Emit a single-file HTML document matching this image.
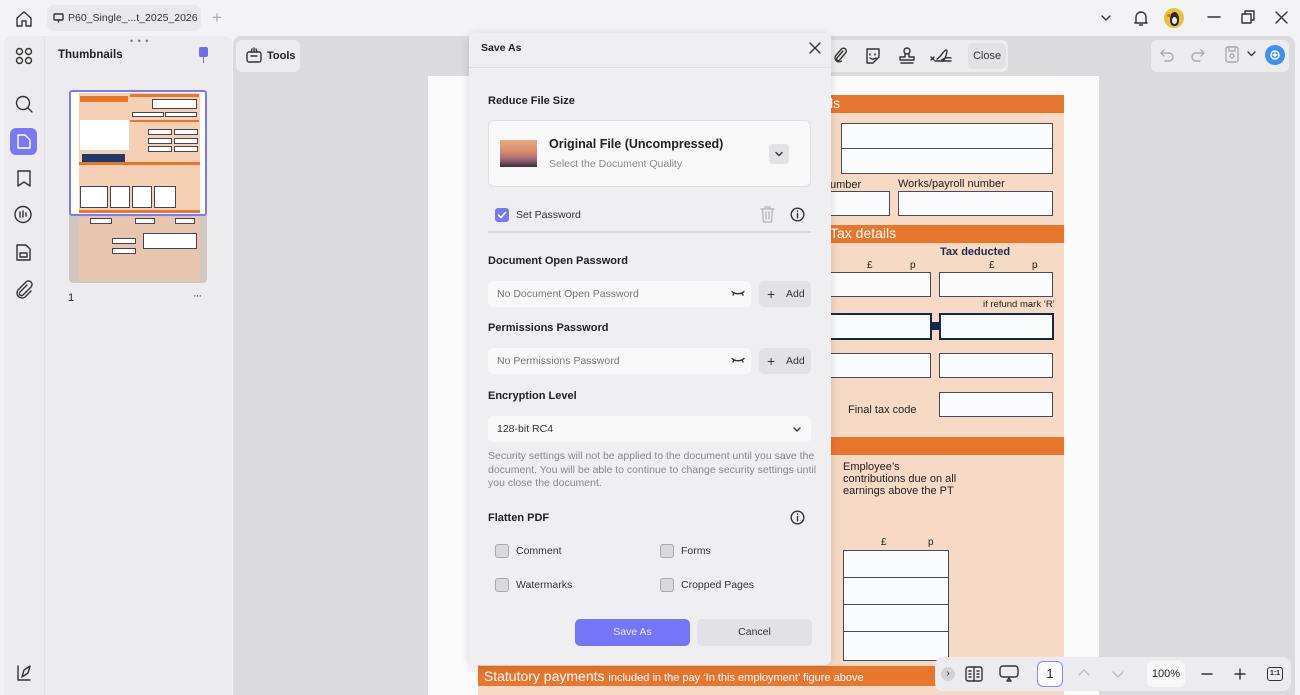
<!DOCTYPE html>
<html><head><meta charset="utf-8"><style>
*{box-sizing:border-box;margin:0;padding:0}
body{width:1300px;height:695px;overflow:hidden;background:#f3f3f5;font-family:"Liberation Sans",sans-serif;position:relative;color:#222}
.a{position:absolute}
svg{position:absolute;fill:none;stroke:#333;stroke-width:1.4;stroke-linecap:round;stroke-linejoin:round}
.box{position:absolute;background:#fafbfd;border:1.3px solid #4a4a5a}
.orng{position:absolute;background:#e8772e;color:#fff;font-size:14px;padding-left:2px}
.lbl{position:absolute;font-size:11px;color:#222}
.mt{position:absolute;font-size:11px;color:#222;font-weight:bold}
.cb{position:absolute;width:14px;height:14px;border:1px solid #aaa;border-radius:3px;background:#d9d9dc}
.ct{position:absolute;font-size:10.5px;color:#333}
.tb{position:absolute;border:0.8px solid #445;background:#fff}
</style></head><body>
<!-- top bar -->
<svg style="left:14px;top:9px" width="20" height="20" viewBox="0 0 20 20"><path d="M3 9 L10 3 L17 9 V17 H12 V12 H8 V17 H3 Z"/></svg>
<div class="a" style="left:47px;top:5px;width:154px;height:26px;background:#e9e9ec;border-radius:7px"></div>
<svg style="left:53px;top:13px" width="11" height="10" viewBox="0 0 11 10"><rect x="1" y="1" width="9" height="6" rx="1"/><path d="M5.5 7v2"/></svg>
<div class="a" style="left:68px;top:12px;font-size:10.5px;color:#333">P60_Single_...t_2025_2026</div>
<div class="a" style="left:212px;top:8px;font-size:17px;color:#aaa">+</div>
<svg style="left:1100px;top:13px" width="12" height="10" viewBox="0 0 12 10"><path d="M2 3l4 4 4-4"/></svg>
<svg style="left:1133px;top:9px" width="16" height="18" viewBox="0 0 16 18"><path d="M3 13V8a5 5 0 0 1 10 0v5l1 1H2z M6.5 16h3"/></svg>
<div class="a" style="left:1164px;top:8px;width:20px;height:20px;border-radius:50%;background:#e8c23a;overflow:hidden">
<div class="a" style="left:6px;top:4px;width:9px;height:14px;border-radius:50% 50% 40% 40%;background:#2b2b2b"></div>
<div class="a" style="left:8px;top:9px;width:5px;height:7px;border-radius:50%;background:#f4f0e6"></div>
<div class="a" style="left:3px;top:6px;width:4px;height:3px;border-radius:50%;background:#e86a2a"></div></div>
<svg style="left:1207px;top:10px" width="14" height="14" viewBox="0 0 14 14"><path d="M1 7h12"/></svg>
<svg style="left:1241px;top:10px" width="14" height="14" viewBox="0 0 14 14"><rect x="1" y="4" width="9" height="9"/><path d="M4 4V1h9v9h-3"/></svg>
<svg style="left:1275px;top:11px" width="13" height="13" viewBox="0 0 13 13"><path d="M1 1l11 11M12 1L1 12"/></svg>

<!-- left rail -->
<div class="a" style="left:4px;top:36px;width:228px;height:659px;background:#ececee;border-radius:8px 8px 0 0"></div>
<div class="a" style="left:44px;top:36px;width:1px;height:659px;background:#e2e2e4"></div>
<svg style="left:15px;top:47px" width="18" height="18" viewBox="0 0 18 18"><circle cx="4.5" cy="4.5" r="3"/><circle cx="13.5" cy="4.5" r="3"/><circle cx="4.5" cy="13.5" r="3"/><circle cx="13.5" cy="13.5" r="3"/></svg>
<svg style="left:14px;top:94px" width="20" height="20" viewBox="0 0 20 20"><circle cx="9" cy="9" r="6.5"/><path d="M14 14l4 4"/></svg>
<div class="a" style="left:10px;top:128px;width:27px;height:27px;border-radius:6px;background:#7b78f5"></div>
<svg style="left:16px;top:133px;stroke:#fff" width="16" height="17" viewBox="0 0 16 17"><path d="M2 2h7l5 5v8H2z"/></svg>
<svg style="left:16px;top:169px" width="16" height="19" viewBox="0 0 16 19"><path d="M2 2h12v15l-6-4-6 4z"/></svg>
<svg style="left:13px;top:205px" width="21" height="20" viewBox="0 0 21 20"><circle cx="10" cy="9.5" r="8"/><path d="M7 7v5M10 6v6M13 8v3"/></svg>
<svg style="left:15px;top:243px" width="17" height="19" viewBox="0 0 17 19"><path d="M2 2h9l4 4v11H2z M5 10h7v4H5z"/></svg>
<svg style="left:15px;top:280px" width="18" height="20" viewBox="0 0 18 20"><path d="M12 5l-7 7a2 2 0 0 0 3 3l8-8a3.5 3.5 0 0 0-5-5l-8 8a5 5 0 0 0 7 7l6-6"/></svg>
<svg style="left:15px;top:664px" width="18" height="18" viewBox="0 0 18 18"><path d="M3 2v14h12 M7 13l2-7 6-4-2 7z"/></svg>

<!-- thumbnails -->
<div class="a" style="left:130px;top:36px;font-size:9px;color:#777;letter-spacing:1px">• • •</div>
<div class="a" style="left:58px;top:49px;font-size:11.5px;font-weight:bold">Thumbnails</div>
<div class="a" style="left:199px;top:47px;width:9px;height:10px;background:#6f6cf0;border-radius:2px"></div>
<div class="a" style="left:203px;top:57px;width:1px;height:6px;background:#6f6cf0"></div>
<div class="a" style="left:69px;top:215px;width:138px;height:68px;background:#d2c7bf;border-radius:0 0 4px 4px"></div>
<div class="a" style="left:79px;top:217px;width:121px;height:64px;background:#e8c5ae"></div>
<div class="tb" style="left:90px;top:218px;width:22px;height:6px"></div>
<div class="tb" style="left:135px;top:218px;width:20px;height:6px"></div>
<div class="tb" style="left:175px;top:218px;width:20px;height:6px"></div>
<div class="tb" style="left:112px;top:238px;width:24px;height:6px"></div>
<div class="tb" style="left:112px;top:248px;width:24px;height:6px"></div>
<div class="tb" style="left:143px;top:233px;width:54px;height:16px"></div>
<div class="a" style="left:69px;top:90px;width:138px;height:126px;border:2px solid #7b78f5;background:#fff;border-radius:3px"></div>
<div class="a" style="left:79px;top:93px;width:121px;height:120px;background:#f5d0b4"></div>
<div class="a" style="left:80px;top:96px;width:48px;height:6px;background:#e8772e"></div>
<div class="a" style="left:130px;top:94px;width:69px;height:3px;background:#e8772e"></div>
<div class="tb" style="left:152px;top:99px;width:45px;height:10px"></div>
<div class="tb" style="left:132px;top:112px;width:32px;height:5px"></div>
<div class="tb" style="left:165px;top:112px;width:32px;height:5px"></div>
<div class="a" style="left:130px;top:120px;width:69px;height:2px;background:#e8772e"></div>
<div class="tb" style="left:148px;top:129px;width:24px;height:6px"></div>
<div class="tb" style="left:174px;top:129px;width:24px;height:6px"></div>
<div class="tb" style="left:148px;top:138px;width:24px;height:6px"></div>
<div class="tb" style="left:174px;top:138px;width:24px;height:6px"></div>
<div class="tb" style="left:148px;top:146px;width:24px;height:6px"></div>
<div class="tb" style="left:174px;top:146px;width:24px;height:6px"></div>
<div class="a" style="left:80px;top:120px;width:49px;height:30px;background:#fff"></div>
<div class="a" style="left:82px;top:154px;width:43px;height:9px;background:#1c3a6a"></div>
<div class="a" style="left:79px;top:162px;width:121px;height:3px;background:#e8772e"></div>
<div class="tb" style="left:80px;top:186px;width:28px;height:22px"></div>
<div class="tb" style="left:110px;top:186px;width:20px;height:22px"></div>
<div class="tb" style="left:132px;top:186px;width:20px;height:22px"></div>
<div class="tb" style="left:154px;top:186px;width:22px;height:22px"></div>
<div class="a" style="left:79px;top:210px;width:121px;height:3px;background:#e8772e"></div>
<div class="a" style="left:68px;top:292px;font-size:11px">1</div>
<div class="a" style="left:193px;top:290px;font-size:11px;letter-spacing:-1px">···</div>

<!-- viewer -->
<div class="a" style="left:233px;top:36px;width:1062px;height:659px;background:#dbdbde;border-radius:8px 8px 0 0"></div>
<div class="a" style="left:428px;top:76px;width:671px;height:619px;background:#fbfbfb"></div>
<div class="a" style="left:478px;top:95px;width:586px;height:600px;background:#f6dac5"></div>
<div class="orng" style="left:478px;top:95px;width:586px;height:18px"><span style="position:absolute;left:352px;top:0">ls</span></div>
<div class="box" style="left:841px;top:123px;width:212px;height:26px;border-bottom:none"></div>
<div class="box" style="left:841px;top:148px;width:212px;height:26px"></div>
<div class="lbl" style="left:830px;top:179px">umber</div>
<div class="lbl" style="left:898px;top:178px">Works/payroll number</div>
<div class="box" style="left:830px;top:191px;width:60px;height:25px;border-left:none"></div>
<div class="box" style="left:898px;top:191px;width:155px;height:25px"></div>
<div class="orng" style="left:478px;top:225px;width:586px;height:18px"><span style="position:absolute;left:352px;top:0">Tax details</span></div>
<div class="lbl" style="left:940px;top:246px;font-weight:bold;color:#1c2b4a">Tax deducted</div>
<div class="lbl" style="left:867px;top:260px;font-size:10px">£</div><div class="lbl" style="left:910px;top:260px;font-size:10px">p</div>
<div class="lbl" style="left:989px;top:260px;font-size:10px">£</div><div class="lbl" style="left:1032px;top:260px;font-size:10px">p</div>
<div class="box" style="left:830px;top:272px;width:101px;height:25px;border-left:none"></div>
<div class="box" style="left:939px;top:272px;width:114px;height:25px"></div>
<div class="lbl" style="left:983px;top:299px;font-size:9.5px">if refund mark ‘R’</div>
<div class="box" style="left:830px;top:313px;width:102px;height:27px;border:2.5px solid #14284a;border-left:none"></div>
<div class="a" style="left:932px;top:322px;width:8px;height:8px;background:#14284a"></div>
<div class="box" style="left:939px;top:313px;width:115px;height:27px;border:2.5px solid #14284a"></div>
<div class="box" style="left:830px;top:353px;width:101px;height:25px;border-left:none"></div>
<div class="box" style="left:939px;top:353px;width:114px;height:25px"></div>
<div class="lbl" style="left:848px;top:404px">Final tax code</div>
<div class="box" style="left:939px;top:392px;width:114px;height:25px"></div>
<div class="orng" style="left:478px;top:437px;width:586px;height:18px"></div>
<div class="lbl" style="left:843px;top:461px;line-height:12px">Employee’s<br>contributions due on all<br>earnings above the PT</div>
<div class="lbl" style="left:881px;top:537px;font-size:10px">£</div><div class="lbl" style="left:928px;top:537px;font-size:10px">p</div>
<div class="box" style="left:843px;top:550px;width:106px;height:28px"></div>
<div class="box" style="left:843px;top:577px;width:106px;height:28px"></div>
<div class="box" style="left:843px;top:604px;width:106px;height:28px"></div>
<div class="box" style="left:843px;top:631px;width:106px;height:30px"></div>
<div class="orng" style="left:478px;top:666px;width:586px;height:20px;font-size:14px;line-height:20px">&nbsp;Statutory payments <span style="font-size:11px">included in the pay ‘In this employment’ figure above</span></div>

<!-- tools toolbar -->
<div class="a" style="left:236px;top:40px;width:64px;height:32px;background:#ececee;border-radius:6px"></div>
<svg style="left:245px;top:46px" width="18" height="18" viewBox="0 0 18 18"><rect x="2" y="6" width="14" height="10" rx="2"/><path d="M6 10h6 M6 6l1-3 M12 6l-1-3 M9 6V2"/></svg>
<div class="a" style="left:267px;top:50px;font-size:11px;font-weight:bold">Tools</div>
<div class="a" style="left:820px;top:40px;width:188px;height:32px;background:#ececee;border-radius:6px"></div>
<svg style="left:832px;top:47px" width="16" height="18" viewBox="0 0 16 18"><path d="M11 4l-6 7a1.6 1.6 0 0 0 2.5 2l6-7a2.8 2.8 0 0 0-4-4l-6 7a4 4 0 0 0 6 5"/></svg>
<svg style="left:864px;top:47px" width="18" height="18" viewBox="0 0 18 18"><path d="M3 2h12v8l-6 6H3z M6 7v1 M11 7v1 M6 11c2 1.5 4 1.5 6 0"/></svg>
<svg style="left:898px;top:46px" width="18" height="19" viewBox="0 0 18 19"><circle cx="9" cy="5" r="3"/><path d="M7 8v3H2v3h14v-3h-5V8 M3 17h12"/></svg>
<svg style="left:929px;top:47px" width="24" height="18" viewBox="0 0 24 18"><path d="M2 10l3 3M5 10l-3 3 M8 12c4-2 6-8 9-9s-2 13-4 11 6-4 9-3 M6 14h16"/></svg>
<div class="a" style="left:968px;top:43px;width:38px;height:26px;background:#e2e2e4;border-radius:5px;font-size:11px;color:#333;line-height:26px;text-align:center">Close</div>
<div class="a" style="left:1151px;top:40px;width:138px;height:32px;background:#ececee;border-radius:6px"></div>
<svg style="left:1160px;top:48px;stroke:#aaa" width="14" height="14" viewBox="0 0 14 14"><path d="M4 2L1 5l3 3 M1 5h8a4 4 0 0 1 0 8H5"/></svg>
<svg style="left:1191px;top:48px;stroke:#aaa" width="14" height="14" viewBox="0 0 14 14"><path d="M10 2l3 3-3 3 M13 5H5a4 4 0 0 0 0 8h4"/></svg>
<svg style="left:1225px;top:46px;stroke:#aaa" width="14" height="17" viewBox="0 0 14 17"><rect x="1" y="1" width="12" height="15" rx="2"/><circle cx="7" cy="10" r="2"/><path d="M4 1v4h6V1"/></svg>
<svg style="left:1247px;top:51px" width="9" height="6" viewBox="0 0 9 6"><path d="M1 1l3.5 3.5L8 1"/></svg>
<div class="a" style="left:1265px;top:45px;width:20px;height:20px;border-radius:50%;background:#3f8ff0"></div>
<svg style="left:1269px;top:49px;stroke:#fff" width="12" height="12" viewBox="0 0 12 12"><circle cx="6" cy="6" r="4"/><path d="M6 4v4M4 6h4"/></svg>

<!-- bottom bar -->
<div class="a" style="left:935px;top:657px;width:356px;height:34px;background:#ececee;border-radius:8px"></div>
<div class="a" style="left:941px;top:667px;width:14px;height:14px;border-radius:50%;background:#d2d2d5;font-size:10px;text-align:center;line-height:14px">›</div>
<svg style="left:965px;top:666px" width="18" height="16" viewBox="0 0 18 16"><rect x="1" y="1" width="16" height="14" rx="2"/><path d="M9 1v14 M4 5h2M4 8h2M4 11h2M12 5h2M12 8h2M12 11h2"/></svg>
<svg style="left:999px;top:665px" width="20" height="18" viewBox="0 0 20 18"><rect x="1" y="1" width="18" height="11" rx="3"/><path d="M8 16l2-3 2 3z"/></svg>
<div class="a" style="left:1037px;top:661px;width:26px;height:26px;border:1.3px solid #8b88f0;border-radius:6px;background:#fafafc;font-size:13px;text-align:center;line-height:24px">1</div>
<svg style="left:1078px;top:669px;stroke:#bbb" width="12" height="8" viewBox="0 0 12 8"><path d="M1 6l5-5 5 5"/></svg>
<svg style="left:1112px;top:670px;stroke:#bbb" width="12" height="8" viewBox="0 0 12 8"><path d="M1 2l5 5 5-5"/></svg>
<div class="a" style="left:1147px;top:661px;width:38px;height:26px;background:#f7f7f8;border-radius:5px;font-size:11px;text-align:center;line-height:26px">100%</div>
<svg style="left:1201px;top:668px" width="12" height="12" viewBox="0 0 12 12"><path d="M1 6h10"/></svg>
<svg style="left:1234px;top:668px" width="12" height="12" viewBox="0 0 12 12"><path d="M1 6h10M6 1v10"/></svg>
<div class="a" style="left:1267px;top:667px;width:16px;height:14px;border:1.3px solid #333;border-radius:3px;font-size:7px;text-align:center;line-height:11px;font-weight:bold">1:1</div>

<!-- modal -->
<div class="a" style="left:469px;top:33px;width:362px;height:632px;background:#efeff1;border-radius:6px;box-shadow:0 2px 10px rgba(0,0,0,.15)"></div>
<div class="a" style="left:469px;top:67px;width:362px;height:1px;background:#e0e0e2"></div>
<div class="mt" style="left:481px;top:42px;font-size:10.5px">Save As</div>
<svg style="left:809px;top:42px" width="12" height="12" viewBox="0 0 12 12"><path d="M1 1l10 10M11 1L1 11"/></svg>
<div class="mt" style="left:488px;top:95px">Reduce File Size</div>
<div class="a" style="left:488px;top:120px;width:323px;height:67px;background:#f8f8f9;border:1px solid #dedee0;border-radius:6px"></div>
<div class="a" style="left:500px;top:140px;width:37px;height:27px;background:linear-gradient(#e6a982,#d88a6a 45%,#a56a7a 70%,#3c2e3a)"></div>
<div class="a" style="left:549px;top:137px;font-size:12.5px;font-weight:bold;color:#222">Original File (Uncompressed)</div>
<div class="a" style="left:549px;top:158px;font-size:10.5px;color:#888">Select the Document Quality</div>
<div class="a" style="left:769px;top:144px;width:20px;height:20px;background:#e2e2e4;border-radius:4px"></div>
<svg style="left:775px;top:151px" width="8" height="6" viewBox="0 0 8 6"><path d="M1 1.5l3 3 3-3"/></svg>
<div class="a" style="left:495px;top:208px;width:14px;height:14px;background:#7b78f5;border-radius:3px"></div>
<svg style="left:497px;top:210px;stroke:#fff;stroke-width:1.6" width="10" height="10" viewBox="0 0 10 10"><path d="M1.5 5l2.5 2.5 4.5-5"/></svg>
<div class="ct" style="left:516px;top:209px">Set Password</div>
<svg style="left:760px;top:206px;stroke:#bbb" width="15" height="17" viewBox="0 0 15 17"><path d="M1 3h13 M5 3V1h5v2 M2.5 3l1 13h8l1-13 M6 6v7M9 6v7"/></svg>
<svg style="left:790px;top:207px" width="15" height="15" viewBox="0 0 15 15"><circle cx="7.5" cy="7.5" r="6.3"/><path d="M7.5 6.5v4.5 M7.5 4v.3"/></svg>
<div class="a" style="left:488px;top:231px;width:323px;height:1.5px;background:#d8d8da"></div>
<div class="mt" style="left:488px;top:255px">Document Open Password</div>
<div class="a" style="left:488px;top:281px;width:263px;height:26px;background:#f8f8f9;border-radius:5px"></div>
<div class="ct" style="left:497px;top:288px;color:#777">No Document Open Password</div>
<svg style="left:731px;top:290px" width="14" height="6" viewBox="0 0 14 6"><path d="M1 1.5c3 3 9 3 12 0 M3 3l-1 2M11 3l1 2"/></svg>
<div class="a" style="left:759px;top:281px;width:52px;height:26px;background:#e2e2e4;border-radius:5px"></div>
<div class="ct" style="left:767px;top:286px;font-size:14px;color:#333">+</div>
<div class="ct" style="left:786px;top:288px">Add</div>
<div class="mt" style="left:488px;top:322px">Permissions Password</div>
<div class="a" style="left:488px;top:348px;width:263px;height:26px;background:#f8f8f9;border-radius:5px"></div>
<div class="ct" style="left:497px;top:355px;color:#777">No Permissions Password</div>
<svg style="left:731px;top:357px" width="14" height="6" viewBox="0 0 14 6"><path d="M1 1.5c3 3 9 3 12 0 M3 3l-1 2M11 3l1 2"/></svg>
<div class="a" style="left:759px;top:348px;width:52px;height:26px;background:#e2e2e4;border-radius:5px"></div>
<div class="ct" style="left:767px;top:353px;font-size:14px;color:#333">+</div>
<div class="ct" style="left:786px;top:355px">Add</div>
<div class="mt" style="left:488px;top:390px">Encryption Level</div>
<div class="a" style="left:488px;top:416px;width:323px;height:26px;background:#f8f8f9;border-radius:5px"></div>
<div class="ct" style="left:497px;top:423px">128-bit RC4</div>
<svg style="left:793px;top:427px" width="8" height="5" viewBox="0 0 8 5"><path d="M1 1l3 3 3-3"/></svg>
<div class="a" style="left:488px;top:450px;width:330px;font-size:10.5px;color:#888;line-height:13.5px">Security settings will not be applied to the document until you save the document. You will be able to continue to change security settings until you close the document.</div>
<div class="mt" style="left:488px;top:512px">Flatten PDF</div>
<svg style="left:790px;top:510px" width="15" height="15" viewBox="0 0 15 15"><circle cx="7.5" cy="7.5" r="6.3"/><path d="M7.5 6.5v4.5 M7.5 4v.3"/></svg>
<div class="cb" style="left:495px;top:544px"></div><div class="ct" style="left:516px;top:545px">Comment</div>
<div class="cb" style="left:660px;top:544px"></div><div class="ct" style="left:681px;top:545px">Forms</div>
<div class="cb" style="left:495px;top:578px"></div><div class="ct" style="left:516px;top:579px">Watermarks</div>
<div class="cb" style="left:660px;top:578px"></div><div class="ct" style="left:681px;top:579px">Cropped Pages</div>
<div class="a" style="left:575px;top:619px;width:115px;height:27px;background:#7575f8;border-radius:5px;color:#e8e8ff;font-size:10.5px;text-align:center;line-height:27px">Save As</div>
<div class="a" style="left:697px;top:619px;width:115px;height:27px;background:#e2e2e4;border-radius:5px;color:#333;font-size:10.5px;text-align:center;line-height:27px">Cancel</div>
</body></html>
